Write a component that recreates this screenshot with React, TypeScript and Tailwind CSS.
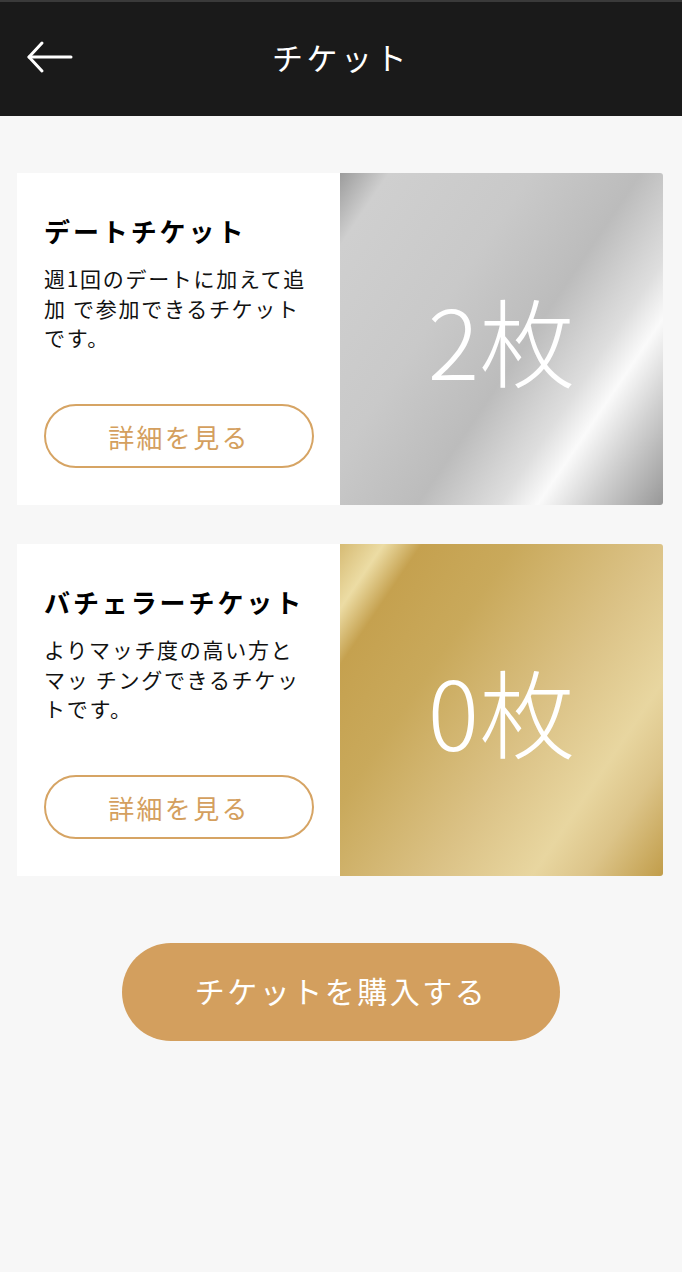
const font = { fontFamily: '"Noto Sans CJK JP", "Noto Sans", sans-serif' }

const tickets = [
  {
    title: 'デートチケット',
    desc: '週1回のデートに加えて追加 で参加できるチケットです。',
    count: '2枚',
    bg: 'bg-[linear-gradient(124deg,#9c9c9c_0%,#cfcfcf_9%,#c9c9c9_35%,#bcbcbc_55%,#dedede_70%,#fafafa_77%,#d2d2d2_86%,#989898_100%)]',
  },
  {
    title: 'バチェラーチケット',
    desc: 'よりマッチ度の高い方とマッ チングできるチケットです。',
    count: '0枚',
    bg: 'bg-[linear-gradient(124deg,#d6bb74_0%,#ecdca4_8%,#c5a14f_15%,#c9a95b_32%,#dbc286_58%,#e8d6a0_76%,#dcc489_86%,#c19d4a_100%)]',
  },
]

export default function App() {
  return (
    <div className="min-h-[1272px] w-full bg-[#f7f7f7]" style={font}>
      {/* Header */}
      <header className="relative flex h-[116px] items-center justify-center border-t-2 border-[#3a3a3a] bg-[#1a1a1a]">
        <button className="absolute left-[26px] top-[38px] p-0">
          <svg width="48" height="34" viewBox="0 0 48 34" fill="none" stroke="white" strokeWidth="3" strokeLinecap="round" strokeLinejoin="round">
            <path d="M3 17 H45" />
            <path d="M16 3 L3 17 L16 31" />
          </svg>
        </button>
        <h1 className="-mt-[6px] text-[31px] leading-none tracking-[3.5px] text-white">チケット</h1>
      </header>

      <main className="pl-[17px] pr-[19px] pt-[57px]">
        <div className="flex flex-col gap-[39px]">
          {tickets.map((t) => (
            <div key={t.title} className="flex h-[332px] w-[646px]">
              {/* Text side */}
              <div className="flex w-[323px] flex-col bg-white pl-[27px] pr-[8px] pt-[40px] pb-[37px]">
                <h2 className="text-[26px] font-bold leading-[36px] tracking-[2.9px] text-black">{t.title}</h2>
                <p className="mt-[15px] w-[267px] text-[21px] leading-[29.5px] tracking-[1.7px] text-[#111]">{t.desc}</p>
                <button className="mt-auto flex h-[64px] w-[270px] items-center justify-center rounded-full border-2 border-[#d6a464] bg-white text-[26px] tracking-[2.3px] text-[#d49f5e]">
                  詳細を見る
                </button>
              </div>
              {/* Count side */}
              <div className={`flex flex-1 items-center justify-center rounded-r-[3px] ${t.bg}`}>
                <span className="text-[96px] font-light leading-none text-white">{t.count}</span>
              </div>
            </div>
          ))}
        </div>

        <div className="mt-[67px] flex justify-center pl-[2px]">
          <button className="flex h-[98px] w-[438px] items-center justify-center rounded-full bg-[#d39f5e] pb-[3px] text-[30px] tracking-[2.5px] text-white">
            チケットを購入する
          </button>
        </div>
      </main>
    </div>
  )
}
